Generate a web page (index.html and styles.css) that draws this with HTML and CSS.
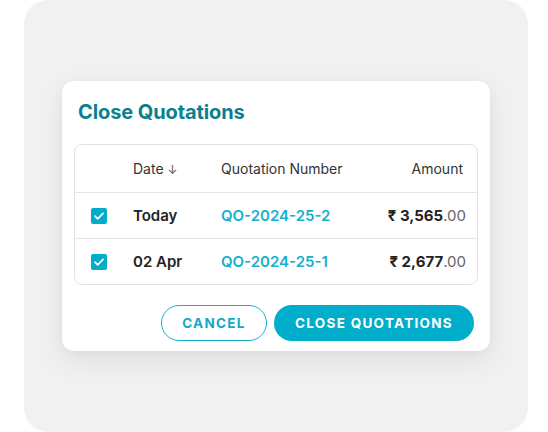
FILE: index.html
```html
<!DOCTYPE html>
<html>
<head>
<meta charset="utf-8">
<link rel="stylesheet" href="styles.css">
</head>
<body>
<div class="panel">
  <div class="dialog">
    <h1 class="title">Close Quotations</h1>
    <div class="table">
      <div class="row head">
        <span></span>
        <span class="date-h">Date <span class="arrow">↓</span></span>
        <span>Quotation Number</span>
        <span class="amt-h">Amount</span>
      </div>
      <div class="row">
        <span class="cb"><svg viewBox="0 0 16 16" width="16" height="16"><rect width="16" height="16" rx="2" fill="#00adcb"/><path d="M4 8.2l2.7 2.6L12 5.4" fill="none" stroke="#fff" stroke-width="1.7" stroke-linecap="round" stroke-linejoin="round"/></svg></span>
        <span class="date">Today</span>
        <span class="qo">QO-2024-25-2</span>
        <span class="amt">₹ 3,565<span class="dec">.00</span></span>
      </div>
      <div class="row">
        <span class="cb"><svg viewBox="0 0 16 16" width="16" height="16"><rect width="16" height="16" rx="2" fill="#00adcb"/><path d="M4 8.2l2.7 2.6L12 5.4" fill="none" stroke="#fff" stroke-width="1.7" stroke-linecap="round" stroke-linejoin="round"/></svg></span>
        <span class="date">02 Apr</span>
        <span class="qo">QO-2024-25-1</span>
        <span class="amt">₹ 2,677<span class="dec">.00</span></span>
      </div>
    </div>
    <div class="actions">
      <button class="btn outline">CANCEL</button>
      <button class="btn solid">CLOSE QUOTATIONS</button>
    </div>
  </div>
</div>
</body>
</html>
```
FILE: styles.css
```css
* { box-sizing: border-box; }
html, body { margin: 0; padding: 0; background: #fff; }
body { font-family: "Inter", "Noto Sans", sans-serif; color: #222; }
.panel {
  margin: 0 20px 0 24px;
  width: 504px;
  height: 432px;
  background: #f1f1f1;
  border-radius: 24px;
  display: flex;
  align-items: center;
  justify-content: center;
}
.dialog {
  width: 428px;
  height: 270px;
  background: #fff;
  border-radius: 12px;
  box-shadow: 0 10px 30px rgba(0,0,0,0.08), 0 2px 8px rgba(0,0,0,0.04);
  padding: 19px 12px 10px;
  display: flex;
  flex-direction: column;
}
.title {
  margin: 0 0 20px 4px;
  font-size: 20px;
  line-height: 24px;
  font-weight: 700;
  color: #0b7f8e;
  letter-spacing: -0.1px;
}
.table {
  border: 1px solid #e2e2e2;
  border-radius: 8px;
}
.row {
  display: grid;
  grid-template-columns: 58px 88px 1fr auto;
  align-items: center;
  height: 46px;
  border-top: 1px solid #e6e6e6;
  padding-right: 11px;
}
.row.head {
  border-top: none;
  height: 47px;
  font-size: 14px;
  color: #333;
  padding-right: 14px;
}
.arrow { font-size: 12px; color: #555; }
.cb { display: flex; padding-left: 16px; }
.cb svg { display: block; }
.date { font-size: 15px; font-weight: 600; color: #222; }
.qo { font-size: 15px; font-weight: 600; color: #17afcf; }
.amt { font-size: 15px; font-weight: 700; color: #222; text-align: right; }
.dec { font-weight: 400; color: #666; }
.actions {
  display: flex;
  justify-content: flex-end;
  gap: 7px;
  margin-top: auto;
  padding-right: 4px;
}
.btn {
  height: 36px;
  border-radius: 18px;
  font-family: "Inter", "Noto Sans", sans-serif;
  font-size: 13.5px;
  font-weight: 700;
  letter-spacing: 1.3px;
  cursor: pointer;
}
.outline {
  width: 106px;
  background: #fff;
  border: 1px solid #17afcf;
  color: #12a9c6;
}
.solid {
  width: 200px;
  background: #00adcb;
  border: none;
  color: #fff;
}
```
